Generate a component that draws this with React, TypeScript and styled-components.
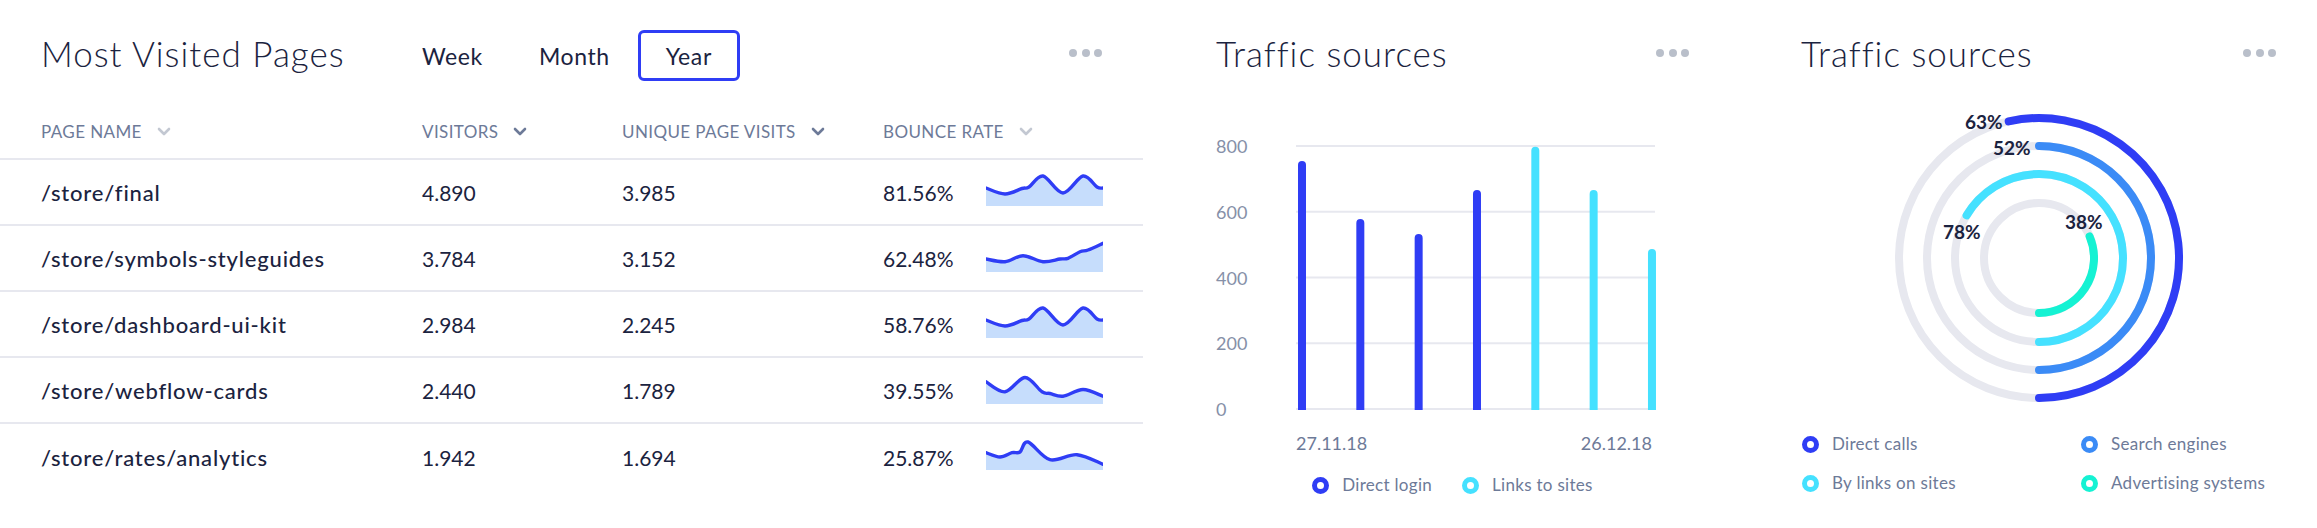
import React from 'react';
import styled, { createGlobalStyle } from 'styled-components';

const colors = {
  navy: '#1b2340',
  slate: '#6d7a98',
  muted: '#8690a8',
  chevronLight: '#c3c8d2',
  line: '#e7e8ef',
  blue: '#2f3df5',
  sky: '#3b8bf6',
  cyan: '#45e1ff',
  teal: '#15f2d3',
  fill: '#c6ddfc',
  dots: '#b9bfca',
};

const GlobalStyle = createGlobalStyle`
  * { box-sizing: border-box; }
  body {
    margin: 0;
    background: #ffffff;
    font-family: Lato, "Noto Sans", sans-serif;
    color: ${colors.navy};
  }
`;

const Page = styled.div`
  display: flex;
  align-items: flex-start;
  width: 2317px;
  height: 528px;
  overflow: hidden;
`;

const TablePanel = styled.section`
  flex: none;
  width: 1143px;
`;

const ChartPanel = styled.section<{ $gap: number; $width: number }>`
  flex: none;
  width: ${p => p.$width}px;
  margin-left: ${p => p.$gap}px;
`;

const TopBar = styled.header<{ $inset?: boolean }>`
  display: flex;
  align-items: center;
  height: 51px;
  margin-top: 30px;
  padding: 0 ${p => (p.$inset ? '41px' : '0')};
`;

const Title = styled.h2<{ $width?: number }>`
  flex: none;
  width: ${p => (p.$width ? `${p.$width}px` : 'auto')};
  margin: 0 0 6px;
  font-size: 35px;
  font-weight: 300;
  letter-spacing: 1px;
  color: ${colors.navy};
`;

const Tabs = styled.nav`
  display: flex;
`;

const Tab = styled.button<{ $active?: boolean }>`
  height: 51px;
  padding: 0 25px;
  border: 3px solid ${p => (p.$active ? colors.blue : 'transparent')};
  border-radius: 6px;
  background: transparent;
  font-family: inherit;
  font-size: 23px;
  font-weight: 400;
  letter-spacing: 0.6px;
  color: ${colors.navy};
  cursor: pointer;
`;

const Dots = styled.div`
  display: flex;
  gap: 4.5px;
  margin: 0 0 5px auto;

  span {
    width: 8px;
    height: 8px;
    border-radius: 50%;
    background: ${colors.dots};
  }
`;

const columns = '381px 200px 261px 103px 117px';

const HeadRow = styled.div`
  display: grid;
  grid-template-columns: ${columns};
  align-items: center;
  height: 79px;
  padding: 23px 0 0 41px;
  border-bottom: 2px solid ${colors.line};
`;

const HeadCell = styled.div<{ $span?: number }>`
  display: flex;
  align-items: center;
  gap: 15px;
  grid-column: span ${p => p.$span || 1};
  font-size: 17px;
  letter-spacing: 0.4px;
  text-transform: uppercase;
  color: ${colors.slate};
`;

const Row = styled.div`
  display: grid;
  grid-template-columns: ${columns};
  align-items: center;
  height: 66px;
  padding-left: 41px;
  border-bottom: 2px solid ${colors.line};

  &:last-child {
    border-bottom: none;
  }
`;

const Cell = styled.div<{ $strong?: boolean }>`
  font-size: ${p => (p.$strong ? 22 : 21)}px;
  font-weight: ${p => (p.$strong ? 500 : 400)};
  letter-spacing: ${p => (p.$strong ? 0.8 : 0)}px;
  color: ${colors.navy};
  white-space: nowrap;
`;

const SparkSvg = styled.svg`
  display: block;
  align-self: start;
  margin-top: 13px;
`;

const ChartGrid = styled.div`
  display: grid;
  grid-template-columns: 80px 360px;
  margin-top: 55px;
`;

const YAxis = styled.div`
  display: flex;
  flex-direction: column;
  justify-content: space-between;
  height: 283px;
  font-size: 18px;
  line-height: 20px;
  color: ${colors.muted};
`;

const XAxis = styled.div`
  grid-column: 2;
  display: flex;
  justify-content: space-between;
  width: 356px;
  margin-top: 14px;
  font-size: 18px;
  line-height: 20px;
  color: ${colors.slate};
`;

const BarLegend = styled.div`
  display: flex;
  justify-content: center;
  gap: 30px;
  margin-top: 22px;
`;

const RingLegend = styled.div`
  display: grid;
  grid-template-columns: 279px 1fr;
  row-gap: 19px;
  margin-top: 26px;
  padding-left: 1px;
`;

const LegendItem = styled.div`
  display: flex;
  align-items: center;
  gap: 13px;
  font-size: 17px;
  line-height: 20px;
  letter-spacing: 0.3px;
  color: ${colors.slate};
  white-space: nowrap;
`;

const LegendMark = styled.span<{ $color: string }>`
  flex: none;
  width: 17px;
  height: 17px;
  border-radius: 50%;
  border: 5px solid ${p => p.$color};
  background: #ffffff;
`;

const RingSvg = styled.svg`
  display: block;
  margin: 27px auto 0;
`;

const RingLabel = styled.text`
  font-family: Lato, "Noto Sans", sans-serif;
  font-size: 19px;
  font-weight: 700;
  fill: ${colors.navy};
`;

type Pt = [number, number];

const smooth = (pts: Pt[]) => {
  let d = `M${pts[0][0]},${pts[0][1]}`;
  for (let i = 0; i < pts.length - 1; i++) {
    const p0 = pts[i - 1] || pts[i];
    const p1 = pts[i];
    const p2 = pts[i + 1];
    const p3 = pts[i + 2] || p2;
    const c1x = p1[0] + (p2[0] - p0[0]) / 6;
    const c1y = p1[1] + (p2[1] - p0[1]) / 6;
    const c2x = p2[0] - (p3[0] - p1[0]) / 6;
    const c2y = p2[1] - (p3[1] - p1[1]) / 6;
    d += ` C${c1x.toFixed(2)},${c1y.toFixed(2)} ${c2x.toFixed(2)},${c2y.toFixed(2)} ${p2[0]},${p2[1]}`;
  }
  return d;
};

const Chevron = ({ light }: { light?: boolean }) => (
  <svg width="14" height="9" viewBox="0 0 14 9">
    <path
      d="M2 2 L7 7 L12 2"
      fill="none"
      stroke={light ? colors.chevronLight : colors.slate}
      strokeWidth="2.6"
      strokeLinecap="round"
      strokeLinejoin="round"
    />
  </svg>
);

const Sparkline = ({ points }: { points: Pt[] }) => {
  const line = smooth(points);
  return (
    <SparkSvg width="117" height="34" viewBox="0 0 117 34">
      <path d={`${line} L117,33 L0,33 Z`} fill={colors.fill} />
      <path d={line} fill="none" stroke={colors.blue} strokeWidth="3.4" strokeLinecap="round" />
    </SparkSvg>
  );
};

const waveA: Pt[] = [[0, 15], [19, 21], [36, 15.5], [43, 14], [57, 3], [77, 20], [97, 3], [111, 14], [117, 15]];

const pages: { name: string; visitors: string; unique: string; bounce: string; trend: Pt[] }[] = [
  { name: '/store/final', visitors: '4.890', unique: '3.985', bounce: '81.56%', trend: waveA },
  {
    name: '/store/symbols-styleguides',
    visitors: '3.784',
    unique: '3.152',
    bounce: '62.48%',
    trend: [[0, 20], [19, 22.7], [37, 16.7], [57, 22.7], [74, 20], [82, 19.3], [94, 12.7], [102, 11], [117, 4.3]],
  },
  { name: '/store/dashboard-ui-kit', visitors: '2.984', unique: '2.245', bounce: '58.76%', trend: waveA },
  {
    name: '/store/webflow-cards',
    visitors: '2.440',
    unique: '1.789',
    bounce: '39.55%',
    trend: [[0, 10.8], [19, 20.8], [39, 6.5], [56, 20.8], [64, 22.5], [77, 25.2], [97, 18.5], [117, 25.2]],
  },
  {
    name: '/store/rates/analytics',
    visitors: '1.942',
    unique: '1.694',
    bounce: '25.87%',
    trend: [[0, 15.7], [14, 20], [26, 15.7], [34, 15], [42, 5], [64, 22.7], [91, 17.7], [117, 27.3]],
  },
];

const bars = [
  { value: 754, color: colors.blue },
  { value: 578, color: colors.blue },
  { value: 532, color: colors.blue },
  { value: 666, color: colors.blue },
  { value: 798, color: colors.cyan },
  { value: 666, color: colors.cyan },
  { value: 487, color: colors.cyan },
];

const BarChart = () => {
  const base = 273;
  const scale = 263 / 800;
  return (
    <svg width="360" height="283" viewBox="0 0 360 283">
      {[0, 1, 2, 3, 4].map(i => (
        <line key={i} x1="0" x2="359" y1={10 + i * 65.75} y2={10 + i * 65.75} stroke={colors.line} strokeWidth="2" />
      ))}
      {bars.map((b, i) => {
        const x = 6 + i * 58.33;
        const top = base - b.value * scale;
        return (
          <path
            key={i}
            d={`M${x - 4},${base + 1} V${top + 4} A4,4 0 0 1 ${x + 4},${top + 4} V${base + 1} Z`}
            fill={b.color}
          />
        );
      })}
    </svg>
  );
};

const rings = [
  { r: 140, end: -102.5, color: colors.blue, label: '63%', lx: 76, ly: 21 },
  { r: 112, end: -90, color: colors.sky, label: '52%', lx: 104, ly: 47 },
  { r: 84, end: -149.5, color: colors.cyan, label: '78%', lx: 54, ly: 131 },
  { r: 55, end: -23, color: colors.teal, label: '38%', lx: 176, ly: 121 },
];

const arcPath = (r: number, endDeg: number) => {
  const c = 150;
  const sweep = 90 - endDeg;
  const a = (endDeg * Math.PI) / 180;
  const ex = c + r * Math.cos(a);
  const ey = c + r * Math.sin(a);
  return `M${c},${c + r} A${r},${r} 0 ${sweep > 180 ? 1 : 0} 0 ${ex.toFixed(2)},${ey.toFixed(2)}`;
};

const RingChart = () => (
  <RingSvg width="300" height="300" viewBox="0 0 300 300">
    {rings.map(ring => (
      <g key={ring.label}>
        <circle cx="150" cy="150" r={ring.r} fill="none" stroke={colors.line} strokeWidth="8" />
        <path d={arcPath(ring.r, ring.end)} fill="none" stroke={ring.color} strokeWidth="8" strokeLinecap="round" />
        <RingLabel x={ring.lx} y={ring.ly}>
          {ring.label}
        </RingLabel>
      </g>
    ))}
  </RingSvg>
);

const MoreDots = () => (
  <Dots>
    <span />
    <span />
    <span />
  </Dots>
);

export default function App() {
  return (
    <>
      <GlobalStyle />
      <Page>
        <TablePanel>
          <TopBar $inset>
            <Title $width={353}>Most Visited Pages</Title>
            <Tabs>
              <Tab>Week</Tab>
              <Tab>Month</Tab>
              <Tab $active>Year</Tab>
            </Tabs>
            <MoreDots />
          </TopBar>
          <HeadRow>
            <HeadCell>
              Page name <Chevron light />
            </HeadCell>
            <HeadCell>
              Visitors <Chevron />
            </HeadCell>
            <HeadCell>
              Unique page visits <Chevron />
            </HeadCell>
            <HeadCell $span={2}>
              Bounce rate <Chevron light />
            </HeadCell>
          </HeadRow>
          {pages.map(p => (
            <Row key={p.name}>
              <Cell $strong>{p.name}</Cell>
              <Cell>{p.visitors}</Cell>
              <Cell>{p.unique}</Cell>
              <Cell>{p.bounce}</Cell>
              <Sparkline points={p.trend} />
            </Row>
          ))}
        </TablePanel>

        <ChartPanel $gap={73} $width={473}>
          <TopBar>
            <Title>Traffic sources</Title>
            <MoreDots />
          </TopBar>
          <ChartGrid>
            <YAxis>
              <span>800</span>
              <span>600</span>
              <span>400</span>
              <span>200</span>
              <span>0</span>
            </YAxis>
            <BarChart />
            <XAxis>
              <span>27.11.18</span>
              <span>26.12.18</span>
            </XAxis>
          </ChartGrid>
          <BarLegend>
            <LegendItem>
              <LegendMark $color={colors.blue} />
              Direct login
            </LegendItem>
            <LegendItem>
              <LegendMark $color={colors.cyan} />
              Links to sites
            </LegendItem>
          </BarLegend>
        </ChartPanel>

        <ChartPanel $gap={112} $width={475}>
          <TopBar>
            <Title>Traffic sources</Title>
            <MoreDots />
          </TopBar>
          <RingChart />
          <RingLegend>
            <LegendItem>
              <LegendMark $color={colors.blue} />
              Direct calls
            </LegendItem>
            <LegendItem>
              <LegendMark $color={colors.sky} />
              Search engines
            </LegendItem>
            <LegendItem>
              <LegendMark $color={colors.cyan} />
              By links on sites
            </LegendItem>
            <LegendItem>
              <LegendMark $color={colors.teal} />
              Advertising systems
            </LegendItem>
          </RingLegend>
        </ChartPanel>
      </Page>
    </>
  );
}
